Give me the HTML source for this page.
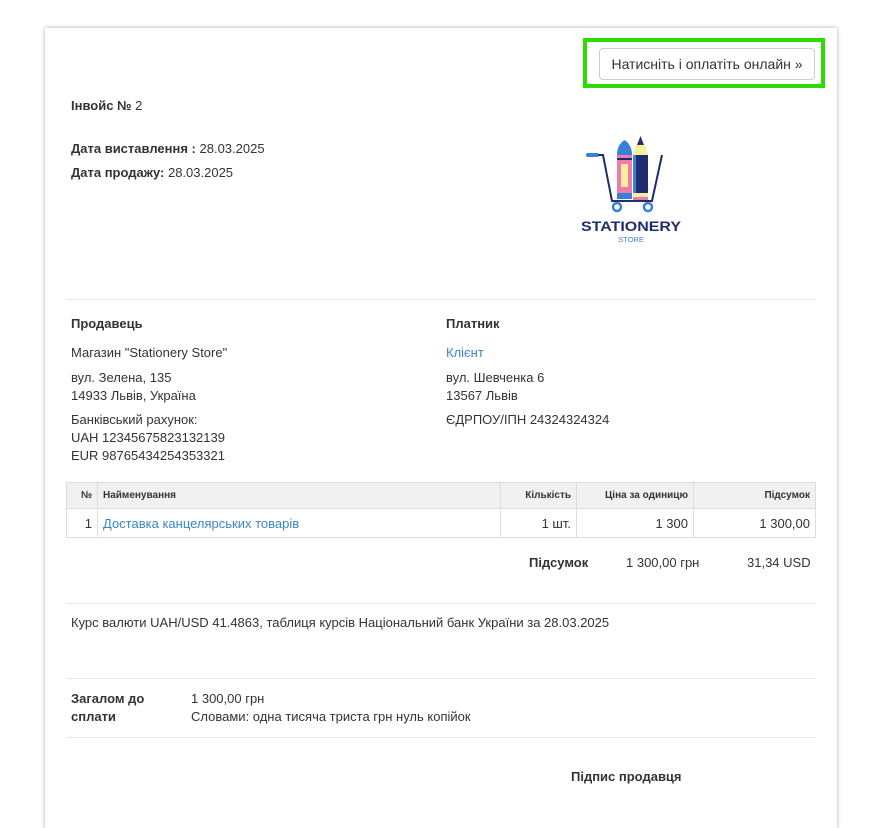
<!DOCTYPE html>
<html><head><meta charset="utf-8"><style>
body{margin:0;background:#fff;font-family:"Liberation Sans",Arial,sans-serif;font-size:13px;color:#333;}
.card{position:absolute;left:45px;top:28px;width:792px;height:800px;background:#fff;box-shadow:0 0 4px rgba(0,0,0,.35);}
.a{position:absolute;white-space:nowrap;}
b{font-weight:bold;}
.hr{position:absolute;left:21px;width:750px;height:1px;background:#e6e6e6;}
.blue{color:#3a87c8;}
table{position:absolute;left:21px;top:454px;width:750px;border-collapse:collapse;}
td,th{border:1px solid #ddd;padding:0 5px;}
th{background:#f1f1f1;font-size:10px;font-weight:bold;height:25px;text-align:right;}
td{height:28px;text-align:right;font-size:13px;}
</style></head><body>
<div class="card">
<div class="a" style="left:538px;top:10px;width:242px;height:50px;border:4px solid #2fdc00;box-sizing:border-box;"></div>
<div class="a" style="left:554px;top:20px;width:216px;height:32px;border:1px solid #ccc;border-radius:4px;box-sizing:border-box;font-size:14px;line-height:30px;text-align:center;color:#333;">Натисніть і оплатіть онлайн »</div>
<div class="a" style="left:26px;top:70px"><b>Інвойс №</b> 2</div>
<div class="a" style="left:26px;top:113px"><b>Дата виставлення :</b> 28.03.2025</div>
<div class="a" style="left:26px;top:137px"><b>Дата продажу:</b> 28.03.2025</div>
<svg class="a" style="left:535px;top:107px" width="105" height="112" viewBox="0 0 105 112">
<rect x="6" y="18" width="13" height="4" rx="2" fill="#3a7fd8"/>
<path d="M18 20 L23 20 L32 66 L72 66 L82 20" fill="none" stroke="#1f2d6e" stroke-width="2"/>
<circle cx="37" cy="72" r="4" fill="#fff" stroke="#3a7fd8" stroke-width="2.5"/>
<circle cx="68" cy="72" r="4" fill="#fff" stroke="#3a7fd8" stroke-width="2.5"/>
<path d="M37 20 Q37 10 44.5 5 Q52 10 52 20 Z" fill="#3a7fd8"/>
<rect x="37" y="20" width="15" height="38" fill="#f07aa8"/>
<rect x="37" y="23" width="15" height="2" fill="#1f2d6e"/>
<rect x="41" y="29" width="7" height="23" fill="#f7ef9c"/>
<rect x="37" y="58" width="15" height="6" fill="#3a7fd8"/>
<path d="M57 10 L60.5 1 L64 10 Z" fill="#1f2d6e"/>
<path d="M53 20 L56 10 L65 10 L68 20 Z" fill="#f7ef9c"/>
<rect x="53" y="20" width="15" height="38" fill="#1f2d6e"/>
<rect x="53" y="20" width="3" height="38" fill="#3a7fd8"/>
<rect x="53" y="58" width="15" height="4" fill="#f7ef9c"/>
<rect x="53" y="62" width="15" height="3" fill="#f07aa8"/>
<text x="51" y="96" text-anchor="middle" font-family="Liberation Sans" font-weight="bold" font-size="14" textLength="100" lengthAdjust="spacingAndGlyphs" fill="#1f2d6e">STATIONERY</text>
<text x="51" y="107" text-anchor="middle" font-family="Liberation Sans" font-size="7.5" fill="#3a7fd8">STORE</text>
</svg>
<div class="hr" style="top:271px"></div>
<div class="a" style="left:26px;top:288px"><b>Продавець</b></div>
<div class="a" style="left:26px;top:317px">Магазин "Stationery Store"</div>
<div class="a" style="left:26px;top:341px;line-height:18px">вул. Зелена, 135<br>14933 Львів, Україна</div>
<div class="a" style="left:26px;top:383px;line-height:18px">Банківський рахунок:<br>UAH 12345675823132139<br>EUR 98765434254353321</div>
<div class="a" style="left:401px;top:288px"><b>Платник</b></div>
<div class="a blue" style="left:401px;top:317px">Клієнт</div>
<div class="a" style="left:401px;top:341px;line-height:18px">вул. Шевченка 6<br>13567 Львів</div>
<div class="a" style="left:401px;top:384px">ЄДРПОУ/ІПН 24324324324</div>
<table>
<tr><th style="width:20px">№</th><th style="text-align:left">Найменування</th><th style="width:65px">Кількість</th><th style="width:106px">Ціна за одиницю</th><th style="width:111px">Підсумок</th></tr>
<tr><td>1</td><td style="text-align:left" class="blue">Доставка канцелярських товарів</td><td>1 шт.</td><td>1 300</td><td>1 300,00</td></tr>
</table>
<div class="a" style="left:484px;top:527px"><b>Підсумок</b></div>
<div class="a" style="left:581px;top:527px">1 300,00 грн</div>
<div class="a" style="left:702px;top:527px">31,34 USD</div>
<div class="hr" style="top:575px"></div>
<div class="a" style="left:26px;top:587px">Курс валюти UAH/USD 41.4863, таблиця курсів Національний банк України за 28.03.2025</div>
<div class="hr" style="top:650px"></div>
<div class="a" style="left:26px;top:662px;line-height:18px"><b>Загалом до<br>сплати</b></div>
<div class="a" style="left:146px;top:662px;line-height:18px">1 300,00 грн<br>Словами: одна тисяча триста грн нуль копійок</div>
<div class="hr" style="top:709px"></div>
<div class="a" style="left:526px;top:741px"><b>Підпис продавця</b></div>
</div>
</body></html>
